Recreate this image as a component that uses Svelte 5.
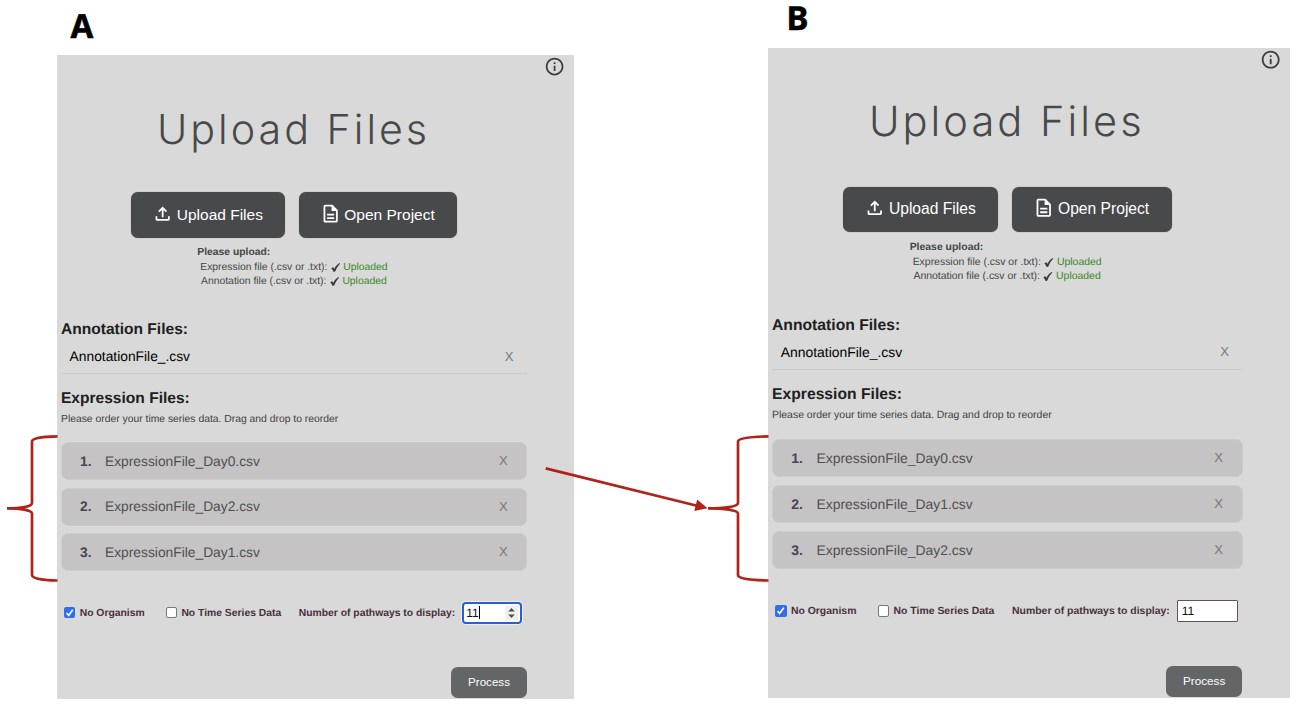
<script>
  const panels = [
    {
      label: 'A',
      kind: 'first',
      focused: true,
      files: ['ExpressionFile_Day0.csv', 'ExpressionFile_Day2.csv', 'ExpressionFile_Day1.csv']
    },
    {
      label: 'B',
      kind: 'second',
      focused: false,
      files: ['ExpressionFile_Day0.csv', 'ExpressionFile_Day1.csv', 'ExpressionFile_Day2.csv']
    }
  ];
</script>

{#snippet tick()}
  <svg class="tick" viewBox="0 0 9 9"><path d="M0 5.2 1.9 4.2C2.5 4.7 2.8 5.3 3 5.9 4.2 3.4 5.8 1.4 8.2 0L9 0.5C6.8 2.6 5.2 5.2 3.9 8.6L2.2 8.8C1.7 7.4 1.1 6.2 0 5.2Z" /></svg>
{/snippet}

<main>
  {#each panels as p}
    <figure class={p.kind}>
      <figcaption>{p.label}</figcaption>
      <section class="panel">
        <svg class="info" viewBox="0 0 24 24"><path d="M11 7h2v2h-2zm0 4h2v6h-2zm1-9C6.48 2 2 6.48 2 12s4.48 10 10 10 10-4.48 10-10S17.52 2 12 2zm0 18c-4.41 0-8-3.59-8-8s3.59-8 8-8 8 3.59 8 8-3.59 8-8 8z" /></svg>
        <h1>Upload Files</h1>
        <div class="actions">
          <button class="upload">
            <svg viewBox="0 0 24 24"><path d="M18 15v3H6v-3H4v3c0 1.1.9 2 2 2h12c1.1 0 2-.9 2-2v-3h-2zM7 9l1.41 1.41L11 7.83V16h2V7.83l2.59 2.58L17 9l-5-5-5 5z" /></svg>
            <span>Upload Files</span>
          </button>
          <button class="open">
            <svg viewBox="0 0 24 24"><path d="M8 16h8v2H8zm0-4h8v2H8zm6-10H6c-1.1 0-2 .9-2 2v16c0 1.1.89 2 1.99 2H18c1.1 0 2-.9 2-2V8l-6-6zm4 18H6V4h7v5h5v11z" /></svg>
            <span>Open Project</span>
          </button>
        </div>
        <div class="status">
          <strong>Please upload:</strong>
          <p>Expression file (.csv or .txt):{@render tick()}<em>Uploaded</em></p>
          <p class="nudge">Annotation file (.csv or .txt):{@render tick()}<em>Uploaded</em></p>
        </div>

        <h2>Annotation Files:</h2>
        <div class="annotation"><span>AnnotationFile_.csv</span><i>X</i></div>

        <h2 class="expr">Expression Files:</h2>
        <p class="hint">Please order your time series data. Drag and drop to reorder</p>
        <ol>
          {#each p.files as file, n}
            <li><b>{n + 1}.</b><span>{file}</span><i>X</i></li>
          {/each}
        </ol>

        <div class="options">
          <div class="check on">
            <svg viewBox="0 0 12 12"><path d="M2.7 6.4 4.9 8.8 9.2 2.9" /></svg>
          </div>
          <span class="organism">No Organism</span>
          <div class="check"></div>
          <span class="series">No Time Series Data</span>
          <span class="count">Number of pathways to display:</span>
          <div class="number" class:focused={p.focused}>
            <span>11</span>
            {#if p.focused}
              <div class="caret"></div>
              <svg viewBox="0 0 13 14"><path d="M3.3 5.4 6.5 2 9.7 5.4zM3.3 8.6 6.5 12 9.7 8.6z" /></svg>
            {/if}
          </div>
        </div>
        <button class="process">Process</button>
      </section>
    </figure>
  {/each}

  <svg class="marks" viewBox="0 0 1304 704">
    <g fill="none" stroke="#b02318" stroke-width="2.7">
      <path d="M57.5 436.4C44 436.6 32 438 32 441.5V503C32 506.8 20 508.4 7 508.4C20 508.4 32 510 32 513.8V575C32 578.8 44 580.3 57.5 580.5" />
      <path d="M768.5 436.4C752 436.6 738 438 738 441.5V503C738 506.8 724 508.4 708 508.4C724 508.4 738 510 738 513.8V575C738 578.8 752 580.3 768.5 580.5" />
      <path d="M545.7 468.4 697 505.8" />
    </g>
    <path fill="#b02318" d="M707.5 508.3 694.3 511 697.2 499.6Z" />
  </svg>
</main>

<style>
  :global(body) { background: #fff; }
  main {
    position: relative;
    display: flex;
    width: 1304px;
    height: 704px;
    font-family: "Liberation Sans", Arial, sans-serif;
    text-rendering: geometricPrecision;
  }
  figure { margin: 0; }
  .first { margin-left: 57px; width: 711px; }
  .second { width: 522px; }
  figcaption {
    height: 55px;
    padding-left: 13.6px;
    box-sizing: border-box;
    font: 700 33px/51px "Noto Sans", sans-serif;
    -webkit-text-stroke: 0.5px #000;
    color: #000;
  }
  .second figcaption { height: 48px; line-height: 36px; padding-left: 18.6px; }
  .panel {
    position: relative;
    width: 517px;
    height: 644px;
    box-sizing: border-box;
    padding: 49px 0 0 4px;
    background: #d9d9d9;
    display: flex;
    flex-direction: column;
    align-items: flex-start;
    white-space: nowrap;
  }
  .second .panel { zoom: 1.0096; }
  .info { position: absolute; left: 487.3px; top: 1.2px; width: 21.2px; height: 21.2px; fill: #3c3c3d; }
  h1 {
    margin: 0 0 38.2px 96px;
    font: 300 41.2px/50px Inter, sans-serif;
    letter-spacing: 3px;
    color: #48494a;
  }
  button { border: 0; padding: 0; font-family: inherit; color: #fff; display: flex; align-items: center; box-sizing: border-box; }
  .actions { display: flex; gap: 14px; margin-left: 70px; height: 45.5px; }
  .actions button { background: #48494b; border-radius: 7px; font-size: 15.5px; box-shadow: 0 0 1px #77787a; }
  .actions svg { width: 21.3px; height: 21.3px; fill: #fff; margin-bottom: 3px; }
  .upload { width: 154px; padding-left: 21.2px; gap: 3.3px; }
  .open { width: 158px; padding-left: 21px; gap: 3px; }
  .status { margin: 8.4px 0 0 136.3px; font-size: 10.35px; line-height: 14px; color: #444546; height: 43px; }
  .status strong { display: block; margin-bottom: 1px; }
  .status p { margin: 0 0 0 3px; display: flex; align-items: center; }
  .status p.nudge { margin-left: 3.8px; }
  .tick { width: 9.6px; height: 9px; margin: 0 3.2px 2px 3.2px; fill: #3a3a3b; }
  em { font-style: normal; color: #38861f; }
  h2 { margin: 31px 0 0; font-size: 15.55px; line-height: 20px; color: #202021; }
  h2.expr { margin-top: 15.2px; }
  i { font-style: normal; font-size: 13px; color: #78787a; margin-left: auto; }
  .annotation {
    width: 466px;
    height: 34px;
    box-sizing: border-box;
    border-bottom: 1px solid #cbcbcc;
    padding: 0 13.5px 0 8.6px;
    display: flex;
    align-items: center;
    font-size: 13.8px;
    color: #000;
  }
  .annotation i { margin-bottom: 1px; }
  .hint { margin: 3.4px 0 0; font-size: 10.35px; line-height: 14px; color: #3e3e3f; }
  ol { list-style: none; margin: 15.7px 0 0; padding: 0; display: flex; flex-direction: column; gap: 7.4px; }
  li {
    width: 466px;
    height: 38px;
    box-sizing: border-box;
    padding: 0 18.3px 0 18px;
    border: 1px solid #cdcccd;
    border-radius: 7px;
    background: #c5c3c4;
    display: flex;
    align-items: center;
    font-size: 13.8px;
    color: #505051;
  }
  li b { width: 25px; color: #474358; }
  li i { margin-bottom: 1px; }
  .options { display: flex; align-items: center; height: 22px; margin-top: 30.5px; padding-left: 3px; font-size: 10.35px; font-weight: 700; color: #48303b; }
  .options > span { padding-top: 2px; }
  .check { width: 11.4px; height: 11.4px; box-sizing: border-box; border-radius: 2px; border: 1px solid #777; background: #fff; margin-right: 4.3px; }
  .check.on { border: 0; background: #2f6fee; display: flex; }
  .check svg { width: 100%; height: 100%; fill: none; stroke: #fff; stroke-width: 1.7; }
  .organism { width: 86px; }
  .series { width: 117.4px; }
  .count { width: 163.2px; }
  .number {
    width: 60.5px;
    height: 22px;
    box-sizing: border-box;
    border: 1px solid #6a4f5b;
    border-radius: 1px;
    background: #fff;
    padding-left: 3.8px;
    display: flex;
    align-items: center;
    font-size: 12px;
    font-weight: 400;
    color: #111;
  }
  .number.focused { width: 60px; border: 2px solid #2a5fcf; border-radius: 4px; padding: 0 2px 0 2.2px; box-shadow: 0 0 0 1px #eeeef0; }
  .caret { width: 1px; height: 13px; background: #000; }
  .number svg { width: 13px; height: 14px; background: #efefef; fill: #4b4b4b; margin-left: auto; }
  .process {
    justify-content: center;
    width: 76px;
    height: 31px;
    margin: 43.3px 0 0 390px;
    padding-bottom: 1px;
    border-radius: 6.5px;
    background: #646566;
    font-size: 11.6px;
  }
  .marks { position: absolute; left: 0; top: 0; width: 1304px; height: 704px; pointer-events: none; }
</style>
